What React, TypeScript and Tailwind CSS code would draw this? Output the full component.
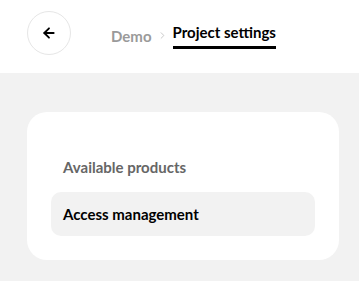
import { ArrowLeft, ChevronRight } from "lucide-react";

export default function App() {
  return (
    <div className="min-h-screen w-[359px] bg-[#f2f2f2] font-['Lato',sans-serif]">
      {/* Header */}
      <header className="flex h-[73px] items-start bg-white pl-[27px] pt-[11px]">
        <button className="flex h-[44px] w-[44px] items-center justify-center rounded-full border border-[#e6e6e6] bg-white">
          <ArrowLeft className="h-[16px] w-[16px] text-black" strokeWidth={2.75} />
        </button>
        <nav className="ml-[40px] flex items-center pt-[11px] text-[15px] font-bold leading-[20px]">
          <span className="text-[#9a9a9a]">Demo</span>
          <ChevronRight className="mx-[5px] h-[11px] w-[11px] text-[#c4c4c4]" strokeWidth={2} />
          <span className="border-b-[3px] border-black pb-[4px] text-black">Project settings</span>
        </nav>
      </header>

      {/* Content */}
      <main className="pl-[27px] pr-[20px] pt-[39px]">
        <section className="rounded-[20px] bg-white px-[24px] pb-[24px] pt-[45px]">
          <h2 className="pl-[12px] text-[15px] font-bold leading-[20px] text-[#666]">
            Available products
          </h2>
          <div className="mt-[15px] flex h-[44px] items-center rounded-[10px] bg-[#f2f2f2] px-[12px] text-[15px] font-bold text-black">
            Access management
          </div>
        </section>
      </main>
    </div>
  );
}
